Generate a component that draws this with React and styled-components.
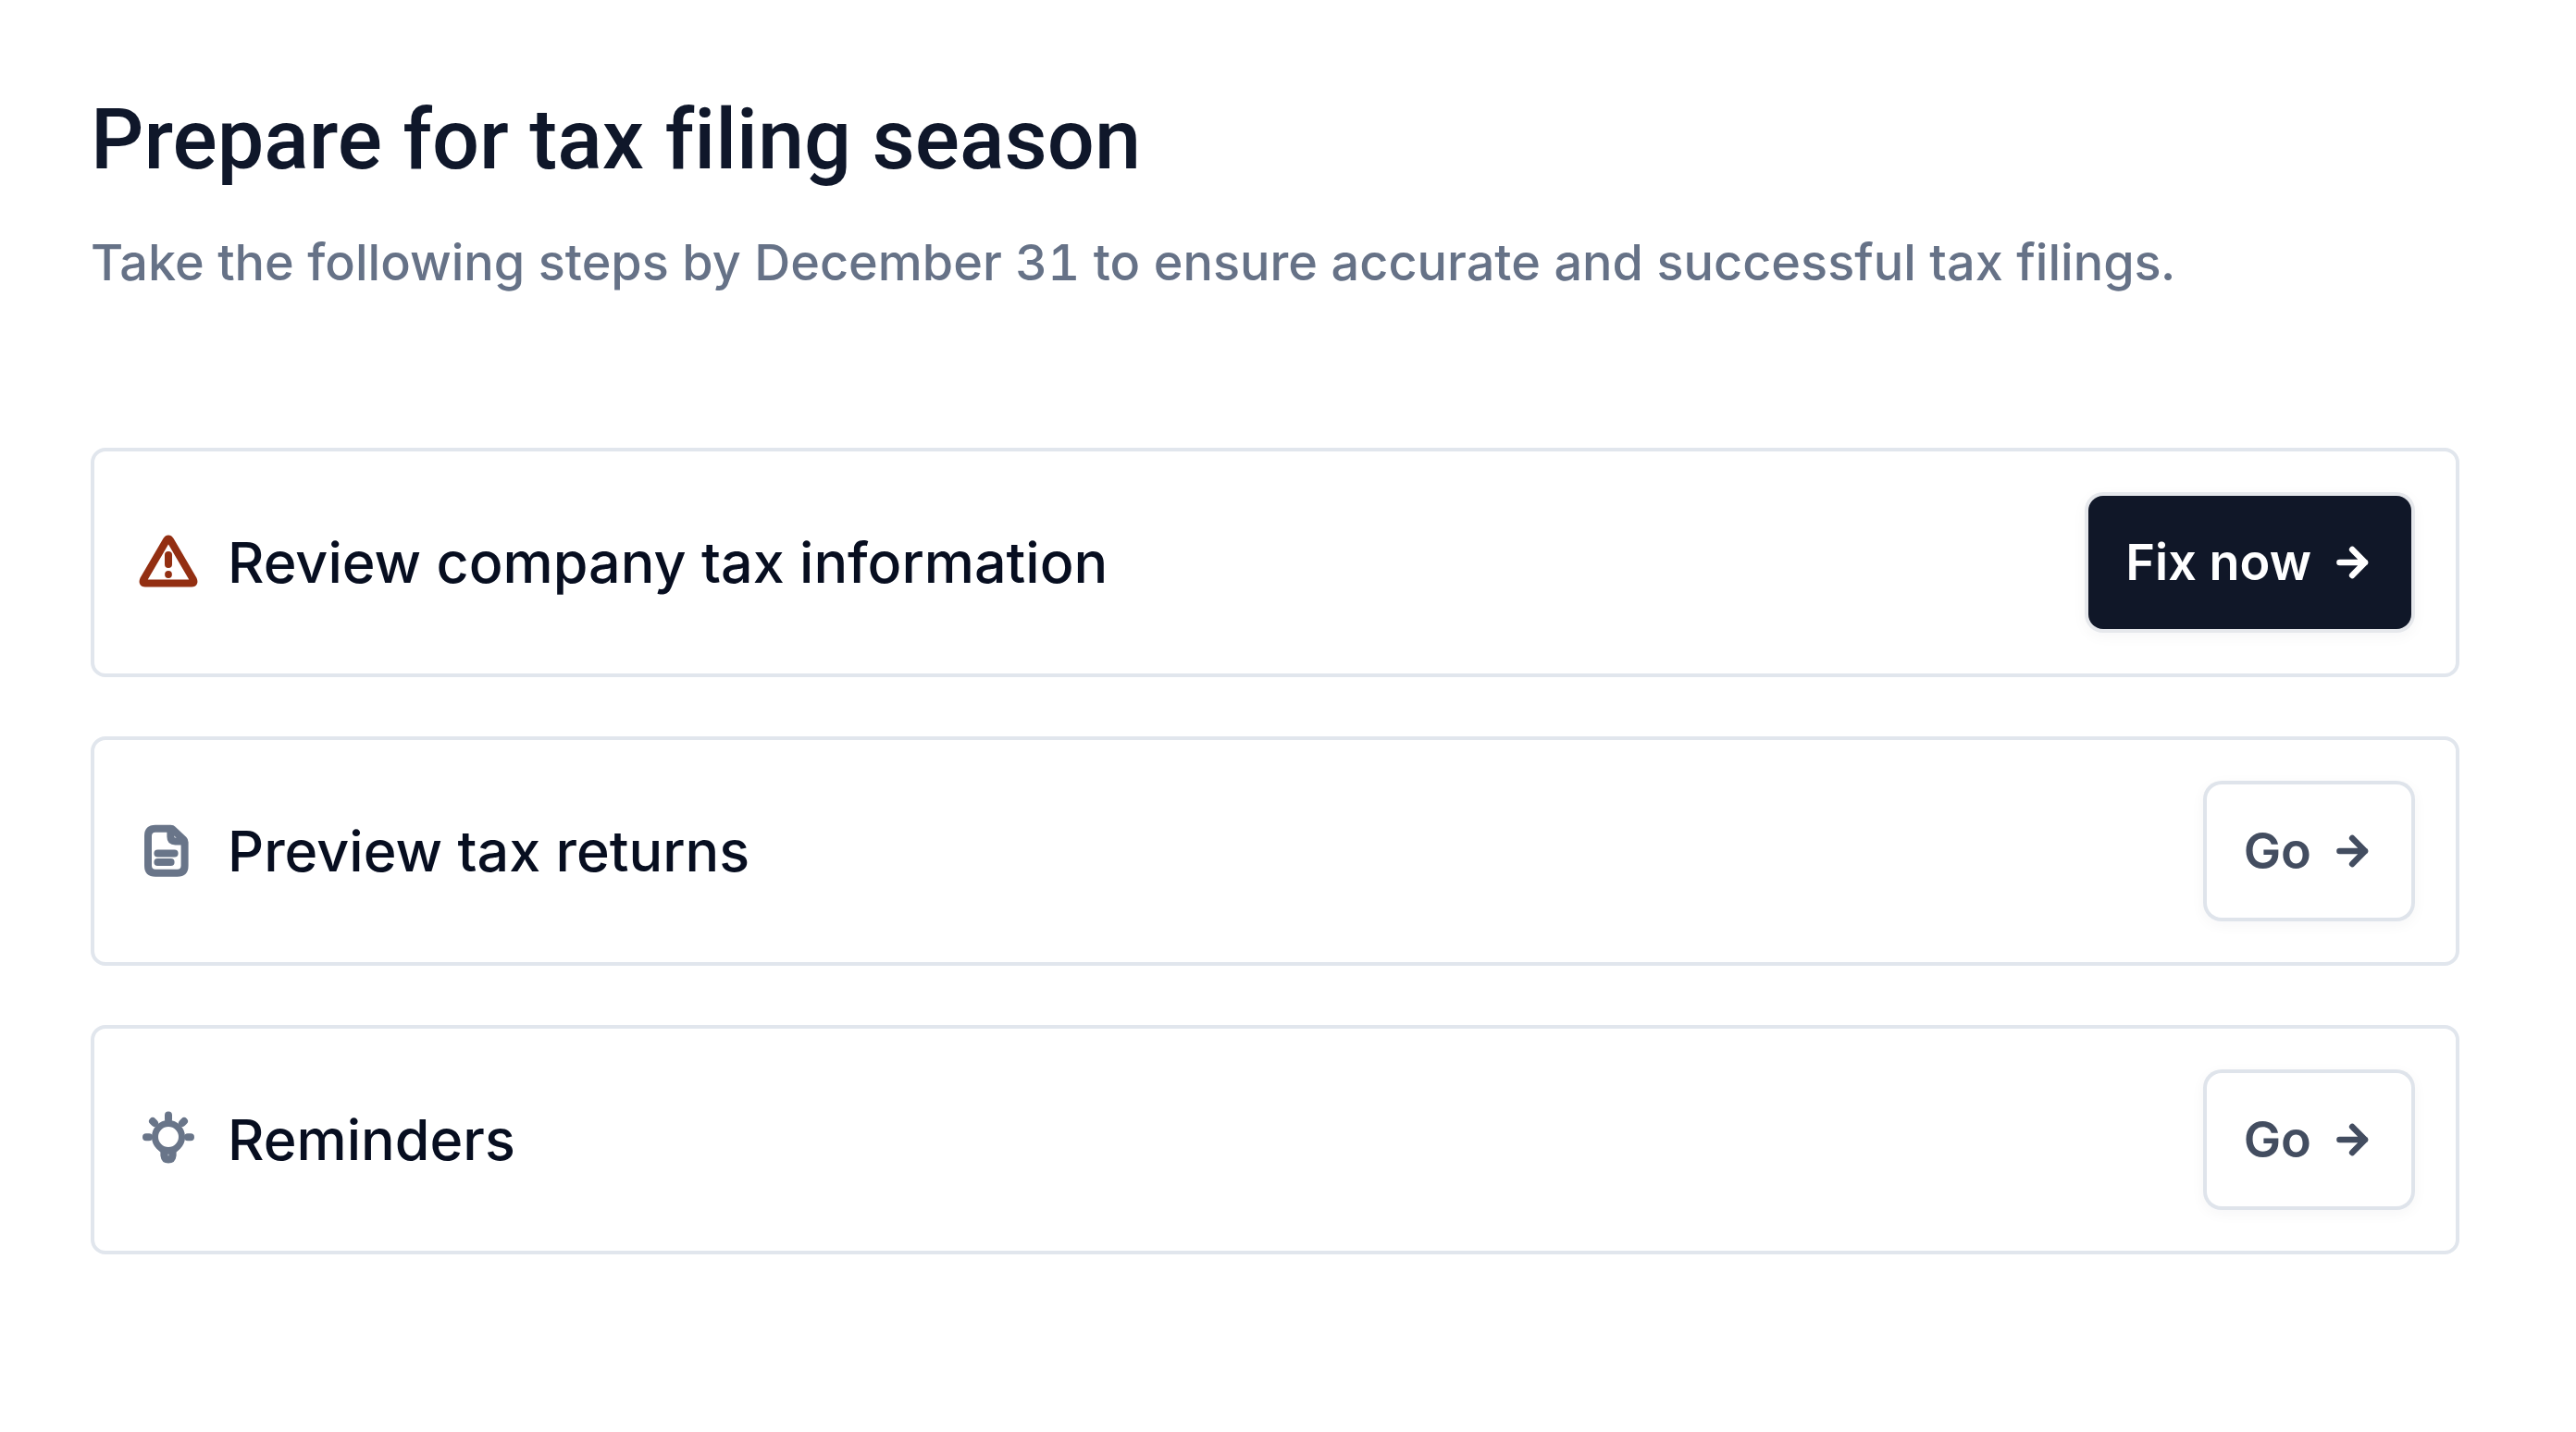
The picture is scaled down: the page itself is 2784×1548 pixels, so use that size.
import styled, { createGlobalStyle, css } from 'styled-components';

const GlobalStyle = createGlobalStyle`
  *,
  *::before,
  *::after {
    box-sizing: border-box;
  }

  body {
    margin: 0;
    background: #ffffff;
    font-family: Inter, 'Liberation Sans', sans-serif;
    font-variant-ligatures: none;
    font-variant-numeric: tabular-nums;
    -webkit-font-smoothing: antialiased;
  }
`;

const Page = styled.main`
  padding: 96px 126px 96px 98px;
`;

const Title = styled.h1`
  margin: 0;
  font-family: Roboto, 'Liberation Sans', sans-serif;
  font-size: 90px;
  line-height: 112px;
  font-weight: 500;
  color: #0f172a;
`;

const Subtitle = styled.p`
  margin: 36px 0 0;
  font-size: 54px;
  line-height: 80px;
  font-weight: 500;
  color: #667287;
`;

const TaskList = styled.ul`
  display: flex;
  flex-direction: column;
  gap: 64px;
  margin: 160px 0 0;
  padding: 0;
  list-style: none;
`;

const TaskRow = styled.li`
  display: flex;
  align-items: center;
  gap: 32px;
  padding: 48px;
  border: 4px solid #e1e6ed;
  border-radius: 16px;
`;

const TaskIcon = styled.svg`
  flex: none;
  width: 64px;
  height: 64px;
  color: ${({ $alert }) => ($alert ? '#932f12' : '#697589')};
`;

const TaskName = styled.h2`
  flex: 1;
  margin: 0;
  font-size: 61px;
  line-height: 80px;
  font-weight: 500;
  color: #070e20;
`;

const TaskButton = styled.button`
  display: flex;
  align-items: center;
  gap: 20px;
  padding: 32px 40px;
  border: 0;
  border-radius: 16px;
  font-family: inherit;
  font-size: 54px;
  line-height: 80px;
  font-weight: 600;
  color: #434d60;
  background: #ffffff;
  box-shadow:
    0 0 0 4px #dfe4eb,
    0 4px 16px 4px rgba(15, 23, 42, 0.04);
  cursor: pointer;

  ${({ $primary }) =>
    $primary &&
    css`
      color: #ffffff;
      background: #101728;
      box-shadow:
        0 0 0 4px #e6e8ec,
        0 4px 16px 4px rgba(15, 23, 42, 0.04);
    `}
`;

const ButtonArrow = styled.svg`
  flex: none;
  width: 48px;
  height: 48px;
`;

const WarningIcon = () => (
  <TaskIcon
    $alert
    viewBox="0 0 64 64"
    fill="none"
    stroke="currentColor"
    strokeWidth="8"
    strokeLinecap="round"
    strokeLinejoin="round"
    aria-hidden="true"
  >
    <path d="M29.8 8.2Q32 5 34.2 8.2L58.9 50.6Q60.6 54.6 57 54.6H7Q3.4 54.6 5.1 50.6Z" />
    <path d="M32 24V34" />
    <circle cx="32" cy="45" r="3.9" fill="currentColor" stroke="none" />
  </TaskIcon>
);

const DocumentIcon = () => (
  <TaskIcon
    viewBox="0 0 64 64"
    fill="none"
    stroke="currentColor"
    strokeWidth="8"
    strokeLinecap="round"
    strokeLinejoin="round"
    aria-hidden="true"
  >
    <path d="M18 7.8H34.5Q36 7.8 37 8.8L48.4 19.6Q49.6 20.8 49.6 22.5V47.8Q49.6 55.8 41.6 55.8H18Q10 55.8 10 47.8V15.8Q10 7.8 18 7.8Z" />
    <path d="M34.4 8.5V16.5Q34.4 21.4 39.4 21.4H48" />
    <path d="M20.4 34.5H38.6M20.4 44H34.6" />
  </TaskIcon>
);

const BulbIcon = () => (
  <TaskIcon
    viewBox="0 0 64 64"
    fill="none"
    stroke="currentColor"
    strokeWidth="8"
    strokeLinecap="round"
    aria-hidden="true"
  >
    <circle cx="32" cy="29" r="14.5" strokeWidth="7" />
    <path d="M32 5.5V10M15 12L17 14M49 12L47 14M8 29.2H11M56 29.2H53" />
    <path
      d="M19 41L23.4 45.5V49.2Q24.4 57.6 32 57.6Q39.6 57.6 40.6 49.2V45.5L45 41Q32 47 19 41Z"
      fill="currentColor"
      stroke="none"
    />
    <circle cx="32" cy="48.4" r="1" fill="#a3abb8" stroke="none" />
  </TaskIcon>
);

const ArrowIcon = () => (
  <ButtonArrow
    viewBox="0 0 48 48"
    fill="none"
    stroke="currentColor"
    strokeWidth="6.6"
    strokeLinecap="round"
    strokeLinejoin="round"
    aria-hidden="true"
  >
    <path d="M10.5 24H38M24.2 10L38 24L24.2 38" />
  </ButtonArrow>
);

const tasks = [
  {
    name: 'Review company tax information',
    Icon: WarningIcon,
    action: 'Fix now',
    primary: true,
  },
  { name: 'Preview tax returns', Icon: DocumentIcon, action: 'Go' },
  { name: 'Reminders', Icon: BulbIcon, action: 'Go' },
];

const App = () => (
  <>
    <GlobalStyle />
    <Page>
      <Title>Prepare for tax filing season</Title>
      <Subtitle>
        Take the following steps by December 31 to ensure accurate and
        successful tax filings.
      </Subtitle>
      <TaskList>
        {tasks.map(({ name, Icon, action, primary }) => (
          <TaskRow key={name}>
            <Icon />
            <TaskName>{name}</TaskName>
            <TaskButton type="button" $primary={primary}>
              {action}
              <ArrowIcon />
            </TaskButton>
          </TaskRow>
        ))}
      </TaskList>
    </Page>
  </>
);

export default App;
